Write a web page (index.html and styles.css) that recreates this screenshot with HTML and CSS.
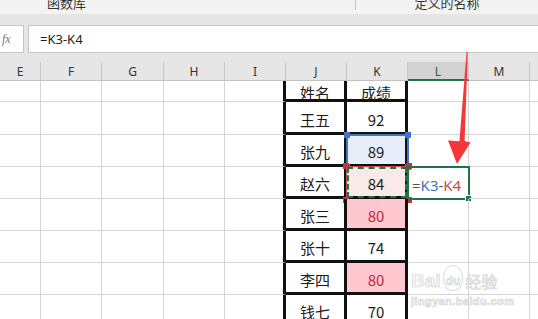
FILE: index.html
```html
<!DOCTYPE html>
<html lang="zh-CN">
  <head>
    <meta charset="UTF-8" />
    <title>成绩表</title>
    <link rel="stylesheet" href="styles.css">
  </head>
  <body>
    <div class="ribbon">
      <div class="group group-func"><span>函数库</span></div>
      <div class="group group-names"><span>定义的名称</span></div>
    </div>

    <div class="formula-bar">
      <div class="fx">fx</div>
      <div class="formula">=K3-K4</div>
    </div>

    <div class="sheet">
      <div class="head">E</div>
      <div class="head">F</div>
      <div class="head">G</div>
      <div class="head">H</div>
      <div class="head">I</div>
      <div class="head">J</div>
      <div class="head">K</div>
      <div class="head head-active">L</div>
      <div class="head">M</div>
      <div class="head"></div>

      <!-- row 1 -->
      <div class="cell"></div><div class="cell"></div><div class="cell"></div><div class="cell"></div>
      <div class="cell edge"></div>
      <div class="cell t">姓名</div>
      <div class="cell t">成绩</div>
      <div class="cell"></div><div class="cell"></div><div class="cell"></div>

      <!-- row 2 -->
      <div class="cell"></div><div class="cell"></div><div class="cell"></div><div class="cell"></div>
      <div class="cell edge"></div>
      <div class="cell t">王五</div>
      <div class="cell t">92</div>
      <div class="cell"></div><div class="cell"></div><div class="cell"></div>

      <!-- row 3 -->
      <div class="cell"></div><div class="cell"></div><div class="cell"></div><div class="cell"></div>
      <div class="cell edge"></div>
      <div class="cell t">张九</div>
      <div class="cell t ref-blue">89<i class="ref-box"><b class="h tl"></b><b class="h tr"></b><b class="h bl"></b><b class="h br"></b></i></div>
      <div class="cell"></div><div class="cell"></div><div class="cell"></div>

      <!-- row 4 -->
      <div class="cell"></div><div class="cell"></div><div class="cell"></div><div class="cell"></div>
      <div class="cell edge"></div>
      <div class="cell t">赵六</div>
      <div class="cell t ref-red">84<i class="ref-box"><b class="h tl"></b><b class="h tr"></b><b class="h bl"></b><b class="h br"></b></i><i class="ants"></i></div>
      <div class="cell active"><span class="eq">=</span><span class="k3">K3</span><span class="eq">-</span><span class="k4">K4</span><i class="active-box"><b class="fill-handle"></b></i></div>
      <div class="cell"></div><div class="cell"></div>

      <!-- row 5 -->
      <div class="cell"></div><div class="cell"></div><div class="cell"></div><div class="cell"></div>
      <div class="cell edge"></div>
      <div class="cell t">张三</div>
      <div class="cell t low">80</div>
      <div class="cell"></div><div class="cell"></div><div class="cell"></div>

      <!-- row 6 -->
      <div class="cell"></div><div class="cell"></div><div class="cell"></div><div class="cell"></div>
      <div class="cell edge"></div>
      <div class="cell t">张十</div>
      <div class="cell t">74</div>
      <div class="cell"></div><div class="cell"></div><div class="cell"></div>

      <!-- row 7 -->
      <div class="cell"></div><div class="cell"></div><div class="cell"></div><div class="cell"></div>
      <div class="cell edge"></div>
      <div class="cell t">李四</div>
      <div class="cell t low">80</div>
      <div class="cell"></div><div class="cell"></div><div class="cell"></div>

      <!-- row 8 -->
      <div class="cell"></div><div class="cell"></div><div class="cell"></div><div class="cell"></div>
      <div class="cell edge"></div>
      <div class="cell t">钱七</div>
      <div class="cell t">70</div>
      <div class="cell"></div><div class="cell"></div><div class="cell"></div>
    </div>

    <!-- annotation arrow drawn over the sheet -->
    <svg class="arrow" width="538" height="319" viewBox="0 0 538 319">
      <polygon points="466.6,52 467.8,52 464.6,141 470.5,142.5 457,164 448,140.5 459.4,141.2" fill="#f5373a" />
    </svg>

    <div class="watermark">
      <div class="wm-logo"><span class="wm-bai">Bai</span><span class="wm-paw">du</span><span class="wm-jy">经验</span></div>
      <div class="wm-url">jingyan.baidu.com</div>
    </div>
  </body>
</html>
```

FILE: styles.css
```css
body {
  margin: 0;
  width: 538px;
  height: 319px;
  overflow: hidden;
  position: relative;
  background-color: #ffffff;
  font-family: "Noto Sans", "Noto Sans CJK SC", sans-serif;
  color: #222222;
}
.ribbon {
  display: flex;
  height: 14px;
  background-color: #f3f3f3;
  overflow: hidden;
}
.group {
  height: 14px;
  overflow: hidden;
  text-align: center;
  font-family: "Noto Sans CJK SC", sans-serif;
  font-size: 13px;
  color: #333333;
}
.group span {
  display: block;
  margin-top: -5px;
  line-height: 16px;
}
.group-func {
  width: 363px;
  border-right: 1px solid #c6c6c6;
  height: 10px;
}
.group-func span {
  padding-right: 222px;
}
.group-names {
  width: 186px;
}
.formula-bar {
  display: flex;
  gap: 4px;
  height: 28px;
  padding: 11px 0 9px;
  background-color: #e6e6e6;
}
.fx {
  width: 24px;
  background-color: #ffffff;
  border: 1px solid #c6c6c6;
  border-left: none;
  box-sizing: border-box;
  padding-left: 2px;
  line-height: 26px;
  font-family: "Liberation Serif", serif;
  font-style: italic;
  font-size: 12px;
  color: #777777;
}
.formula {
  flex: 1;
  background-color: #ffffff;
  border: 1px solid #c6c6c6;
  border-right: none;
  box-sizing: border-box;
  padding-left: 11px;
  line-height: 26px;
  font-size: 13px;
  color: #222222;
}
.sheet {
  display: grid;
  grid-template-columns: 41px 61px 62px 61px 61px 61px 61px 61px 61px 9px;
  grid-template-rows: 19px 21px 33px repeat(6, 32px);
}
.head {
  background-color: #e6e6e6;
  border-right: 1px solid #c9c9c9;
  border-bottom: 1px solid #c2c2c2;
  box-sizing: border-box;
  text-align: center;
  line-height: 20px;
  font-size: 12px;
  color: #333333;
}
.head-active {
  background-color: #d2d2d2;
  border-bottom: 2px solid #217346;
  color: #1e6b41;
}
.cell {
  position: relative;
  display: flex;
  align-items: center;
  justify-content: center;
  padding-top: 4px;
  box-sizing: border-box;
  border-right: 1px solid #d4d4d4;
  border-bottom: 1px solid #d4d4d4;
  font-family: "Noto Sans CJK SC", sans-serif;
  font-size: 15px;
  color: #1c1c1c;
}
.edge {
  border-right: 3px solid #111111;
}
.t {
  border-right: 3px solid #111111;
  border-bottom: 3px solid #111111;
}
.low {
  background-color: #ffc7ce;
  color: #c0283a;
}
.ref-blue {
  background-color: #e8eef9;
}
.ref-red {
  background-color: #f9e9e9;
}
.ref-box {
  position: absolute;
  left: -1px;
  top: -1px;
  right: -4px;
  bottom: -4px;
  border: 2px solid #4472c4;
}
.ref-red .ref-box {
  border: 1px solid #c0504d;
}
.h {
  position: absolute;
  width: 6px;
  height: 6px;
  background-color: #4472c4;
}
.ref-red .h {
  background-color: #c0343a;
}
.h.tl { left: -4px; top: -4px; }
.h.tr { right: -4px; top: -4px; }
.h.bl { left: -4px; bottom: -4px; }
.h.br { right: -4px; bottom: -4px; }
.ants {
  position: absolute;
  left: 0;
  top: 0;
  right: -2px;
  bottom: -2px;
  border: 2px dashed #217346;
}
.active {
  justify-content: flex-start;
  padding-left: 4px;
  font-family: "Noto Sans", sans-serif;
  font-size: 15px;
}
.eq {
  color: #555555;
}
.k3 {
  color: #4472c4;
}
.k4 {
  color: #c0504d;
}
.active-box {
  position: absolute;
  left: -1px;
  top: -1px;
  right: -2px;
  bottom: -2px;
  border: 2px solid #217346;
}
.fill-handle {
  position: absolute;
  right: -4px;
  bottom: -4px;
  width: 5px;
  height: 5px;
  background-color: #217346;
  border: 1px solid #ffffff;
}
.arrow {
  position: absolute;
  left: 0;
  top: 0;
}
.watermark {
  position: absolute;
  left: 411px;
  top: 260px;
  color: #f6f6f6;
  -webkit-text-stroke: 0.7px #d6d6d6;
  font-family: "Liberation Sans", sans-serif;
}
.wm-logo {
  display: flex;
  align-items: flex-end;
  height: 31px;
}
.wm-bai {
  font-size: 19px;
  font-weight: bold;
  line-height: 20px;
}
.wm-paw {
  margin: 0 2px;
  padding: 6px 2px 0;
  border-radius: 50% 50% 45% 45%;
  border: 1px solid #dedede;
  font-size: 12px;
  font-weight: bold;
  line-height: 18px;
}
.wm-jy {
  font-family: "Noto Sans CJK SC", sans-serif;
  font-size: 16px;
  line-height: 20px;
}
.wm-url {
  margin-top: 4px;
  font-size: 11px;
  font-weight: bold;
  letter-spacing: 0.4px;
}
```
